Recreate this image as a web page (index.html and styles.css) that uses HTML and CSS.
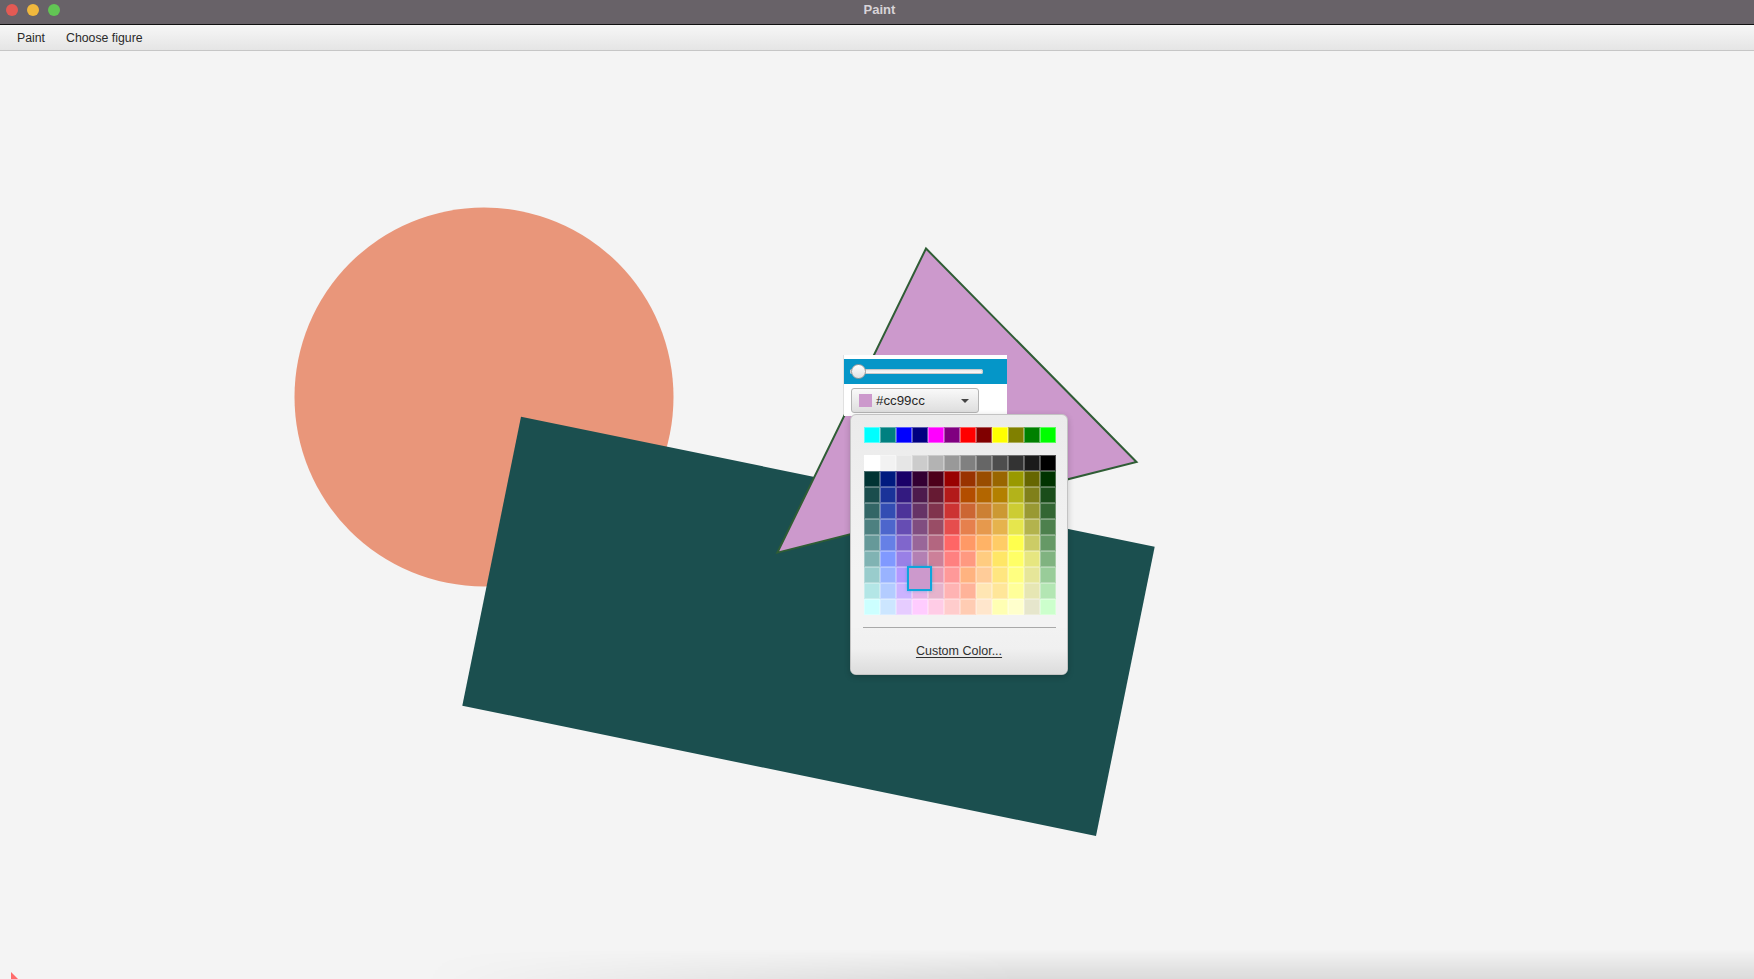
FILE: index.html
```html
<!DOCTYPE html>
<html>
<head>
<meta charset="utf-8">
<title>Paint</title>
<link rel="stylesheet" href="styles.css">
</head>
<body>
<div class="window">
  <header class="titlebar">
    <div class="lights">
      <span class="light red"></span>
      <span class="light yellow"></span>
      <span class="light green"></span>
    </div>
    <div class="title">Paint</div>
  </header>
  <nav class="menubar">
    <span class="menu-item">Paint</span>
    <span class="menu-item">Choose figure</span>
  </nav>
  <main class="canvas">
    <svg class="drawing" width="1754" height="928" viewBox="0 51 1754 928" xmlns="http://www.w3.org/2000/svg">
      <circle cx="484" cy="397" r="189.5" fill="#e9967a"/>
      <polygon points="521,416.7 1154.7,546.7 1096,836 462.3,705.7" fill="#1b4f4f"/>
      <polygon points="926,248.5 1136.5,462 777.4,552.6" fill="#cc99cc" stroke="#2f5d35" stroke-width="2" stroke-linejoin="miter"/>
      <polygon points="11,972 18,979 11,979" fill="#ff6b6b"/>
    </svg>

    <div class="toolbox">
      <div class="slider-band">
        <div class="slider-track"></div>
        <div class="slider-knob"></div>
      </div>
      <div class="combo">
        <span class="combo-swatch"></span>
        <span class="combo-text">#cc99cc</span>
        <span class="combo-arrow"></span>
      </div>
    </div>

    <div class="palette-popup">
      <div class="palette-row">
        <span class="cell" style="background:#00ffff"></span>
        <span class="cell" style="background:#008080"></span>
        <span class="cell" style="background:#0000ff"></span>
        <span class="cell" style="background:#000080"></span>
        <span class="cell" style="background:#ff00ff"></span>
        <span class="cell" style="background:#800080"></span>
        <span class="cell" style="background:#ff0000"></span>
        <span class="cell" style="background:#800000"></span>
        <span class="cell" style="background:#ffff00"></span>
        <span class="cell" style="background:#808000"></span>
        <span class="cell" style="background:#008000"></span>
        <span class="cell" style="background:#00ff00"></span>
      </div>
      <div class="palette-grid">
        <span class="cell" style="background:rgb(255,255,255)"></span>
        <span class="cell" style="background:rgb(242,242,242)"></span>
        <span class="cell" style="background:rgb(230,230,230)"></span>
        <span class="cell" style="background:rgb(204,204,204)"></span>
        <span class="cell" style="background:rgb(179,179,179)"></span>
        <span class="cell" style="background:rgb(153,153,153)"></span>
        <span class="cell" style="background:rgb(128,128,128)"></span>
        <span class="cell" style="background:rgb(102,102,102)"></span>
        <span class="cell" style="background:rgb(77,77,77)"></span>
        <span class="cell" style="background:rgb(51,51,51)"></span>
        <span class="cell" style="background:rgb(26,26,26)"></span>
        <span class="cell" style="background:rgb(0,0,0)"></span>

        <span class="cell" style="background:rgb(0,51,51)"></span>
        <span class="cell" style="background:rgb(0,26,128)"></span>
        <span class="cell" style="background:rgb(26,0,104)"></span>
        <span class="cell" style="background:rgb(51,0,51)"></span>
        <span class="cell" style="background:rgb(77,0,26)"></span>
        <span class="cell" style="background:rgb(153,0,0)"></span>
        <span class="cell" style="background:rgb(153,51,0)"></span>
        <span class="cell" style="background:rgb(153,77,0)"></span>
        <span class="cell" style="background:rgb(153,102,0)"></span>
        <span class="cell" style="background:rgb(153,153,0)"></span>
        <span class="cell" style="background:rgb(102,102,0)"></span>
        <span class="cell" style="background:rgb(0,51,0)"></span>

        <span class="cell" style="background:rgb(26,77,77)"></span>
        <span class="cell" style="background:rgb(26,51,153)"></span>
        <span class="cell" style="background:rgb(51,26,128)"></span>
        <span class="cell" style="background:rgb(77,26,77)"></span>
        <span class="cell" style="background:rgb(102,26,51)"></span>
        <span class="cell" style="background:rgb(179,26,26)"></span>
        <span class="cell" style="background:rgb(179,77,0)"></span>
        <span class="cell" style="background:rgb(179,102,0)"></span>
        <span class="cell" style="background:rgb(179,128,0)"></span>
        <span class="cell" style="background:rgb(179,179,26)"></span>
        <span class="cell" style="background:rgb(128,128,26)"></span>
        <span class="cell" style="background:rgb(26,77,26)"></span>

        <span class="cell" style="background:rgb(51,102,102)"></span>
        <span class="cell" style="background:rgb(51,77,179)"></span>
        <span class="cell" style="background:rgb(77,51,153)"></span>
        <span class="cell" style="background:rgb(102,51,102)"></span>
        <span class="cell" style="background:rgb(128,51,77)"></span>
        <span class="cell" style="background:rgb(204,51,51)"></span>
        <span class="cell" style="background:rgb(204,102,51)"></span>
        <span class="cell" style="background:rgb(204,128,51)"></span>
        <span class="cell" style="background:rgb(204,153,51)"></span>
        <span class="cell" style="background:rgb(204,204,51)"></span>
        <span class="cell" style="background:rgb(153,153,51)"></span>
        <span class="cell" style="background:rgb(51,102,51)"></span>

        <span class="cell" style="background:rgb(77,128,128)"></span>
        <span class="cell" style="background:rgb(77,102,204)"></span>
        <span class="cell" style="background:rgb(102,77,179)"></span>
        <span class="cell" style="background:rgb(128,77,128)"></span>
        <span class="cell" style="background:rgb(153,77,102)"></span>
        <span class="cell" style="background:rgb(230,77,77)"></span>
        <span class="cell" style="background:rgb(230,128,77)"></span>
        <span class="cell" style="background:rgb(230,153,77)"></span>
        <span class="cell" style="background:rgb(230,179,77)"></span>
        <span class="cell" style="background:rgb(230,230,77)"></span>
        <span class="cell" style="background:rgb(179,179,77)"></span>
        <span class="cell" style="background:rgb(77,128,77)"></span>

        <span class="cell" style="background:rgb(102,153,153)"></span>
        <span class="cell" style="background:rgb(102,128,230)"></span>
        <span class="cell" style="background:rgb(128,102,204)"></span>
        <span class="cell" style="background:rgb(153,102,153)"></span>
        <span class="cell" style="background:rgb(179,102,128)"></span>
        <span class="cell" style="background:rgb(255,102,102)"></span>
        <span class="cell" style="background:rgb(255,153,102)"></span>
        <span class="cell" style="background:rgb(255,179,102)"></span>
        <span class="cell" style="background:rgb(255,204,102)"></span>
        <span class="cell" style="background:rgb(255,255,77)"></span>
        <span class="cell" style="background:rgb(204,204,102)"></span>
        <span class="cell" style="background:rgb(102,153,102)"></span>

        <span class="cell" style="background:rgb(128,179,179)"></span>
        <span class="cell" style="background:rgb(128,153,255)"></span>
        <span class="cell" style="background:rgb(153,128,230)"></span>
        <span class="cell" style="background:rgb(179,128,179)"></span>
        <span class="cell" style="background:rgb(204,128,153)"></span>
        <span class="cell" style="background:rgb(255,128,128)"></span>
        <span class="cell" style="background:rgb(255,153,128)"></span>
        <span class="cell" style="background:rgb(255,204,128)"></span>
        <span class="cell" style="background:rgb(255,230,102)"></span>
        <span class="cell" style="background:rgb(255,255,102)"></span>
        <span class="cell" style="background:rgb(230,230,128)"></span>
        <span class="cell" style="background:rgb(128,179,128)"></span>

        <span class="cell" style="background:rgb(153,204,204)"></span>
        <span class="cell" style="background:rgb(153,179,255)"></span>
        <span class="cell" style="background:rgb(179,153,255)"></span>
        <span class="cell selected" style="background:rgb(204,153,204)"></span>
        <span class="cell" style="background:rgb(230,153,179)"></span>
        <span class="cell" style="background:rgb(255,153,153)"></span>
        <span class="cell" style="background:rgb(255,179,128)"></span>
        <span class="cell" style="background:rgb(255,204,153)"></span>
        <span class="cell" style="background:rgb(255,230,128)"></span>
        <span class="cell" style="background:rgb(255,255,128)"></span>
        <span class="cell" style="background:rgb(230,230,153)"></span>
        <span class="cell" style="background:rgb(153,204,153)"></span>

        <span class="cell" style="background:rgb(179,230,230)"></span>
        <span class="cell" style="background:rgb(179,204,255)"></span>
        <span class="cell" style="background:rgb(204,179,255)"></span>
        <span class="cell" style="background:rgb(230,179,230)"></span>
        <span class="cell" style="background:rgb(230,179,204)"></span>
        <span class="cell" style="background:rgb(255,179,179)"></span>
        <span class="cell" style="background:rgb(255,179,153)"></span>
        <span class="cell" style="background:rgb(255,230,179)"></span>
        <span class="cell" style="background:rgb(255,230,153)"></span>
        <span class="cell" style="background:rgb(255,255,153)"></span>
        <span class="cell" style="background:rgb(230,230,179)"></span>
        <span class="cell" style="background:rgb(179,230,179)"></span>

        <span class="cell" style="background:rgb(204,255,255)"></span>
        <span class="cell" style="background:rgb(204,230,255)"></span>
        <span class="cell" style="background:rgb(230,204,255)"></span>
        <span class="cell" style="background:rgb(255,204,255)"></span>
        <span class="cell" style="background:rgb(255,204,230)"></span>
        <span class="cell" style="background:rgb(255,204,204)"></span>
        <span class="cell" style="background:rgb(255,204,179)"></span>
        <span class="cell" style="background:rgb(255,230,204)"></span>
        <span class="cell" style="background:rgb(255,255,179)"></span>
        <span class="cell" style="background:rgb(255,255,204)"></span>
        <span class="cell" style="background:rgb(230,230,204)"></span>
        <span class="cell" style="background:rgb(204,255,204)"></span>
      </div>
      <div class="palette-sep"></div>
      <div class="palette-footer">
        <span class="custom-link">Custom Color...</span>
      </div>
    </div>

    <div class="bottom-shade"></div>
  </main>
</div>
</body>
</html>
```

FILE: styles.css
```css
html, body {
  margin: 0;
  padding: 0;
}
body {
  width: 1754px;
  height: 979px;
  overflow: hidden;
  background: #f4f4f4;
  font-family: "Liberation Sans", Arial, sans-serif;
}
.window {
  width: 1754px;
  height: 979px;
  display: flex;
  flex-direction: column;
}

/* Title bar */
.titlebar {
  height: 24px;
  flex: 0 0 24px;
  background: #686268;
  border-bottom: 1px solid #111;
  position: relative;
  display: flex;
  align-items: center;
  justify-content: center;
}
.lights {
  position: absolute;
  left: 6px;
  top: 4px;
  display: flex;
  gap: 9px;
}
.light {
  width: 12px;
  height: 12px;
  border-radius: 50%;
  display: block;
}
.light.red { background: #e35a54; }
.light.yellow { background: #f0b83d; }
.light.green { background: #62c554; }
.title {
  font-weight: bold;
  font-size: 13px;
  color: #d8d4d8;
  margin-left: 5px;
  margin-top: -5px;
}

/* Menu bar */
.menubar {
  height: 25px;
  flex: 0 0 25px;
  background: linear-gradient(#f7f7f7, #e5e5e5);
  border-bottom: 1px solid #c6c6c6;
  display: flex;
  align-items: center;
  padding-left: 17px;
  gap: 21px;
  font-size: 12.3px;
  color: #2a2a2a;
}
.menu-item {
  padding-top: 1px;
}

/* Canvas */
.canvas {
  flex: 1 1 auto;
  position: relative;
  background: #f4f4f4;
  overflow: hidden;
}
.drawing {
  display: block;
}

/* Toolbox with slider + color combo */
.toolbox {
  position: absolute;
  left: 844px;
  top: 304px;
  width: 163px;
  height: 61px;
  background: #ffffff;
  box-shadow: -1px 0 0 rgba(0,0,0,0.08);
  display: flex;
  flex-direction: column;
  padding-top: 4px;
  box-sizing: border-box;
}
.slider-band {
  height: 25px;
  background: #0596c8;
  position: relative;
}
.slider-track {
  position: absolute;
  left: 6px;
  top: 10px;
  width: 133px;
  height: 5px;
  border-radius: 3px;
  background: linear-gradient(#e4e4e4, #ffffff);
  box-shadow: inset 0 0 0 1px #c9c9c9;
}
.slider-knob {
  position: absolute;
  left: 7px;
  top: 5px;
  width: 15px;
  height: 15px;
  box-sizing: border-box;
  border-radius: 50%;
  background: linear-gradient(#ffffff, #e2e2e2);
  border: 1px solid #9a9a9a;
}
.combo {
  margin: 4px 0 0 7px;
  width: 128px;
  height: 25px;
  box-sizing: border-box;
  border: 1px solid #b4b4b4;
  border-radius: 3px;
  background: linear-gradient(#f9f9f9, #dedede);
  display: flex;
  align-items: center;
  padding-left: 7px;
  font-size: 13.3px;
  color: #262626;
}
.combo-swatch {
  width: 13px;
  height: 13px;
  background: #cc99cc;
  margin-right: 4px;
}
.combo-text {
  flex: 1;
}
.combo-arrow {
  width: 0;
  height: 0;
  border-left: 4px solid transparent;
  border-right: 4px solid transparent;
  border-top: 4px solid #454545;
  margin-right: 9px;
}

/* Palette popup */
.palette-popup {
  position: absolute;
  left: 850px;
  top: 363px;
  width: 218px;
  height: 261px;
  box-sizing: border-box;
  border: 1px solid #c3c3c3;
  border-radius: 6px;
  background: linear-gradient(#ebebeb, #f3f3f3 60%, #f3f3f3);
  box-shadow: 0 2px 6px rgba(0,0,0,0.2);
  padding: 12px 11px 0 13px;
  display: flex;
  flex-direction: column;
  overflow: hidden;
}
.palette-row,
.palette-grid {
  display: grid;
  grid-template-columns: repeat(12, 16px);
  grid-auto-rows: 16px;
}
.palette-grid {
  margin-top: 12px;
  position: relative;
}
.cell {
  display: block;
  width: 16px;
  height: 16px;
  box-sizing: border-box;
  box-shadow: inset 0 0 0 1px rgba(255,255,255,0.3);
}
.palette-row .cell {
  box-shadow: inset 0 0 0 1px rgba(255,255,255,0.35);
}
.cell.selected {
  position: relative;
  z-index: 2;
  width: 25px;
  height: 25px;
  margin: -1px 0 0 -5px;
  border: 2px solid #0ea5dc;
  box-shadow: 0 0 3px rgba(14,165,220,0.5);
}
.palette-sep {
  margin: 12px 0 0 -1px;
  width: 193px;
  height: 1px;
  background: #a9a9a9;
}
.palette-footer {
  flex: 1;
  margin: 0 -11px 0 -13px;
  background: linear-gradient(#f2f2f2, #f0f0f0 45%, #dcdcdc);
  display: flex;
  justify-content: center;
  padding-top: 16px;
  padding-left: 0;
}
.custom-link {
  font-size: 12.5px;
  color: #303030;
  text-decoration: underline;
  text-underline-offset: 2px;
  height: 16px;
}

/* Bottom shading */
.bottom-shade {
  position: absolute;
  left: 420px;
  right: 0;
  bottom: 0;
  height: 30px;
  background: linear-gradient(rgba(0,0,0,0), rgba(0,0,0,0.1));
  -webkit-mask-image: linear-gradient(to right, transparent, #000 600px);
  mask-image: linear-gradient(to right, transparent, #000 600px);
}
```
